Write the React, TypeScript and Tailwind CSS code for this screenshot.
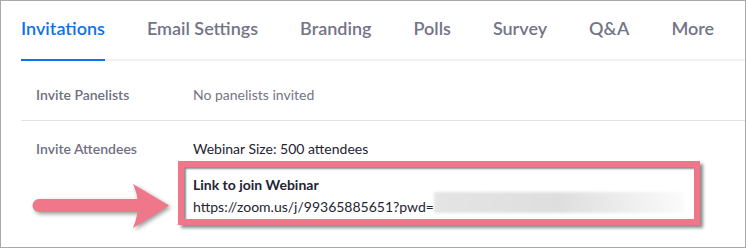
import React from 'react';

const tabs = ['Invitations', 'Email Settings', 'Branding', 'Polls', 'Survey', 'Q&A', 'More'];

export default function App() {
  return (
    <div className="relative w-[746px] h-[248px] overflow-hidden border border-[#a9a9a9] bg-white font-['Lato',sans-serif]">
      {/* Tabs */}
      <div className="ml-[20px] flex gap-[42px] border-b-2 border-[#f2f2f2]">
        {tabs.map((t, i) => (
          <div
            key={t}
            className={`-mb-[2px] pt-[15px] pb-[19px] text-[18px] leading-[24px] font-semibold border-b-2 ${
              i === 0 ? 'text-[#0e72ed] border-[#0e72ed]' : 'text-[#747487] border-transparent'
            }`}
          >
            {t}
          </div>
        ))}
      </div>

      {/* Invite Panelists */}
      <div className="ml-[20px] flex pl-[15px] pt-[24px] pb-[15px] border-b border-[#e2e2e2] text-[14px] leading-[20px]">
        <div className="w-[157px] font-semibold text-[#6e6f82]">Invite Panelists</div>
        <div className="text-[#747487]">No panelists invited</div>
      </div>

      {/* Invite Attendees */}
      <div className="ml-[20px] flex pl-[15px] pt-[18px] text-[14px] leading-[20px]">
        <div className="w-[157px] shrink-0 font-semibold text-[#6e6f82]">Invite Attendees</div>
        <div className="flex flex-col">
          <div className="text-[#232333]">Webinar Size: 500 attendees</div>
          <div className="-ml-[15px] mt-[2px] w-[522px] border-[6px] border-[#ef7789] pl-[9px] pt-[7px] pb-[1px] leading-[22px] text-[#232333] shadow-[3px_3px_3px_rgba(0,0,0,0.45),inset_2px_2px_2px_rgba(0,0,0,0.45)]">
            <div className="font-bold">Link to join Webinar</div>
            <div className="whitespace-nowrap">
              https://zoom.us/j/99365885651?pwd=
              <span className="relative -top-[4px] inline-block h-[21px] w-[250px] align-top bg-gradient-to-r from-[#e4e4e4] via-[#dedede] to-[#fbfbfb] blur-[1.5px]" />
            </div>
          </div>
        </div>
      </div>

      {/* Arrow annotation */}
      <svg
        className="absolute left-[20px] top-[175px] w-[160px] h-[65px] drop-shadow-[2px_2px_2px_rgba(0,0,0,0.4)]"
        viewBox="20 175 160 65"
      >
        <path d="M38 198 H140 V211 H38 A6.5 6.5 0 0 1 38 198 Z" fill="#ef7789" />
        <path d="M132 183 L168 204.5 L132 227 Q137 215 137 204.5 Q137 194 132 183 Z" fill="#ef7789" />
      </svg>
    </div>
  );
}
